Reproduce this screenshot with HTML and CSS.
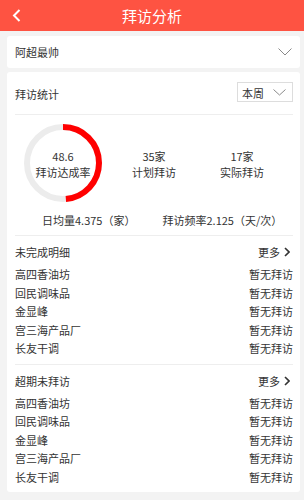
FILE: index.html
```html
<!DOCTYPE html>
<html lang="zh-CN">
<head>
    <meta charset="UTF-8">
    <meta name="viewport" content="width=device-width, initial-scale=1.0">
    <title>拜访分析</title>
    <link rel="stylesheet" href="styles.css">
</head>
<body>
    <header class="top-bar">
        <a class="back-btn" href="#">
            <svg width="9" height="13" viewBox="0 0 9 13"><polyline points="7.5,1 2,6.5 7.5,12" fill="none" stroke="#fff" stroke-width="2"/></svg>
        </a>
        <h1 class="title">拜访分析</h1>
        <span></span>
    </header>

    <main class="page">
        <div class="card user-picker">
            <span>阿超最帅</span>
            <svg width="14" height="8" viewBox="0 0 14 8"><polyline points="0.5,0.5 7,7 13.5,0.5" fill="none" stroke="#8a8a8a" stroke-width="1"/></svg>
        </div>

        <div class="card stats-card">
            <div class="stats-head">
                <span>拜访统计</span>
                <div class="period-select">
                    <span>本周</span>
                    <svg width="13" height="7" viewBox="0 0 13 7"><polyline points="0.5,0.5 6.5,6 12.5,0.5" fill="none" stroke="#8a8a8a" stroke-width="1"/></svg>
                </div>
            </div>

            <div class="stats-body">
                <div class="stats-row">
                    <div class="ring">
                        <svg width="78" height="78" viewBox="0 0 78 78">
                            <circle cx="39" cy="39" r="36" fill="none" stroke="#ececec" stroke-width="6"/>
                            <circle cx="39" cy="39" r="36" fill="none" stroke="#ff0000" stroke-width="6" stroke-dasharray="110 227" transform="rotate(-90 39 39)"/>
                        </svg>
                        <div class="stat">
                            <span>48.6</span>
                            <span>拜访达成率</span>
                        </div>
                    </div>
                    <div class="stat">
                        <span>35家</span>
                        <span>计划拜访</span>
                    </div>
                    <div class="stat">
                        <span>17家</span>
                        <span>实际拜访</span>
                    </div>
                </div>
                <div class="summary">
                    <span>日均量4.375（家）</span>
                    <span>拜访频率2.125（天/次）</span>
                </div>
            </div>

            <section class="detail">
                <div class="detail-head">
                    <span>未完成明细</span>
                    <a class="more" href="#">更多
                        <svg width="6" height="10" viewBox="0 0 6 10"><polyline points="1,1 5,5 1,9" fill="none" stroke="#333" stroke-width="1.6"/></svg>
                    </a>
                </div>
                <ul class="detail-list">
                    <li><span>高四香油坊</span><span>暂无拜访</span></li>
                    <li><span>回民调味品</span><span>暂无拜访</span></li>
                    <li><span>金显峰</span><span>暂无拜访</span></li>
                    <li><span>宫三海产品厂</span><span>暂无拜访</span></li>
                    <li><span>长友干调</span><span>暂无拜访</span></li>
                </ul>
            </section>

            <section class="detail">
                <div class="detail-head">
                    <span>超期未拜访</span>
                    <a class="more" href="#">更多
                        <svg width="6" height="10" viewBox="0 0 6 10"><polyline points="1,1 5,5 1,9" fill="none" stroke="#333" stroke-width="1.6"/></svg>
                    </a>
                </div>
                <ul class="detail-list">
                    <li><span>高四香油坊</span><span>暂无拜访</span></li>
                    <li><span>回民调味品</span><span>暂无拜访</span></li>
                    <li><span>金显峰</span><span>暂无拜访</span></li>
                    <li><span>宫三海产品厂</span><span>暂无拜访</span></li>
                    <li><span>长友干调</span><span>暂无拜访</span></li>
                </ul>
            </section>
        </div>
    </main>
</body>
</html>
```

FILE: styles.css
```css
/* Estilos gerais */
body {
    margin: 0;
    background-color: #f3f3f3;
    font-family: "Noto Sans CJK SC", "Noto Sans", sans-serif;
    font-size: 11px;
    color: #333;
}

/* Barra superior */
.top-bar {
    height: 31px;
    background-color: #fe5342;
    display: grid;
    grid-template-columns: 1fr auto 1fr;
    align-items: center;
}

.back-btn {
    display: flex;
    padding-left: 12px;
}

.title {
    margin: 0;
    font-size: 15px;
    font-weight: normal;
    color: #fff;
}

/* Conteudo */
.page {
    padding: 5px 4px 3px 7px;
    display: flex;
    flex-direction: column;
    gap: 4px;
}

.card {
    background-color: #fff;
    border-radius: 3px;
}

.user-picker {
    height: 32px;
    padding: 0 8px;
    display: flex;
    justify-content: space-between;
    align-items: center;
}

.stats-card {
    padding: 0 7px 6px 8px;
}

.stats-head {
    height: 42px;
    display: flex;
    justify-content: space-between;
    align-items: center;
    border-bottom: 1px solid #eee;
}

.stats-head > span {
    padding-top: 2px;
}

.period-select {
    box-sizing: border-box;
    width: 56px;
    height: 20px;
    margin-top: -3px;
    padding: 2px 6px 0 4px;
    border: 1px solid #ddd;
    display: flex;
    justify-content: space-between;
    align-items: center;
}

/* Anel e numeros */
.stats-body {
    padding: 9px 0 7px;
    border-bottom: 1px solid #eee;
}

.stats-row {
    display: grid;
    grid-template-columns: 96px 86px 90px;
    align-items: center;
}

.ring {
    display: grid;
    justify-items: center;
    align-items: center;
}

.ring > * {
    grid-area: 1 / 1;
}

.stat {
    display: flex;
    flex-direction: column;
    align-items: center;
    line-height: 16px;
    padding-top: 1px;
}

.summary {
    margin-top: 10px;
    padding-left: 27px;
    line-height: 16px;
    display: flex;
    gap: 27px;
    white-space: nowrap;
}

/* Listas de detalhe */
.detail {
    padding-bottom: 6px;
    border-bottom: 1px solid #eee;
}

.detail:last-child {
    border-bottom: none;
    padding-bottom: 0;
}

.detail-head {
    padding-top: 8px;
    line-height: 16px;
    display: flex;
    justify-content: space-between;
    align-items: center;
}

.more {
    color: #333;
    text-decoration: none;
    display: flex;
    align-items: center;
    gap: 4px;
    padding-right: 3px;
}

.detail-list {
    list-style: none;
    margin: 5px 0 0;
    padding: 0;
}

.detail-list li {
    line-height: 18.5px;
    display: flex;
    justify-content: space-between;
}
```
